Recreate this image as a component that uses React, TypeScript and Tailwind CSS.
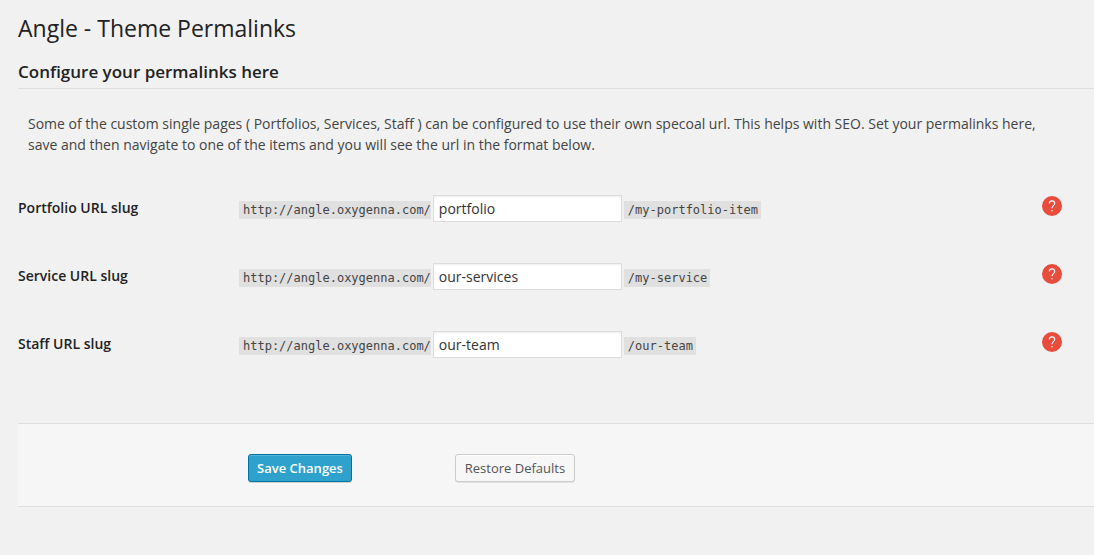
const rows = [
  { id: "portfolio", label: "Portfolio URL slug", value: "portfolio", suffix: "/my-portfolio-item" },
  { id: "service", label: "Service URL slug", value: "our-services", suffix: "/my-service" },
  { id: "staff", label: "Staff URL slug", value: "our-team", suffix: "/our-team" },
];

const codeClass =
  "mt-1 h-[18px] bg-[#e0e0e0] pl-1 font-['DejaVu_Sans_Mono',monospace] text-xs leading-[18px] text-[#444]";

function HelpIcon() {
  return (
    <svg viewBox="0 0 20 20" className="size-5" aria-hidden="true">
      <circle cx="10" cy="10" r="10" fill="#e74c3c" />
      <path
        d="M7.3 7.4C7.4 5.8 8.5 4.9 10 4.9s2.7 1 2.7 2.5c0 2.2-2.7 2.4-2.7 4.9"
        fill="none"
        stroke="#fff"
        strokeWidth="1.1"
      />
      <rect x="9.4" y="14" width="1.2" height="1.3" fill="#fff" />
    </svg>
  );
}

export default function App() {
  return (
    <main className="min-h-screen bg-[#f1f1f1] pl-[18px] font-['Open_Sans',sans-serif] text-sm text-[#444]">
      <h1 className="pt-3 text-[23px] leading-8 text-[#222]">Angle - Theme Permalinks</h1>
      <form onSubmit={(e) => e.preventDefault()}>
        <h2 className="mt-4 border-b border-[#dfdfdf] pb-1 text-[17px] leading-6 font-semibold text-[#222]">
          Configure your permalinks here
        </h2>
        <p className="mt-6 pr-8 pl-[10px] leading-[21px]">
          Some of the custom single pages ( Portfolios, Services, Staff ) can be configured to use their own specoal url.
          This helps with SEO. Set your permalinks here, save and then navigate to one of the items and you will see the
          url in the format below.
        </p>
        <div className="mt-[39px] flex flex-col gap-10">
          {rows.map((row) => (
            <div key={row.id} className="flex h-7 items-center pr-8">
              <label htmlFor={row.id} className="w-[221px] shrink-0 pb-px font-semibold text-[#222]">
                {row.label}
              </label>
              <div className="flex flex-1 items-center gap-[2px]">
                <code className={codeClass}>http://angle.oxygenna.com/</code>
                <input
                  id={row.id}
                  defaultValue={row.value}
                  className="h-[27px] w-[189px] border border-[#ddd] bg-white px-[5px] text-[#333] shadow-[inset_0_1px_2px_rgba(0,0,0,0.07)] outline-none"
                />
                <code className={codeClass + " pr-[3px]"}>{row.suffix}</code>
              </div>
              <button type="button" aria-label={"Help: " + row.label} className="mb-1">
                <HelpIcon />
              </button>
            </div>
          ))}
        </div>
        <div className="mt-[65px] flex border-y border-[#dfdfdf] bg-[#f6f6f6] pt-[30px] pb-6 pl-[230px]">
          <button
            type="submit"
            className="mr-[103px] h-7 w-[104px] rounded-[3px] border border-[#0074a2] bg-[#2ea2cc] text-[13px] font-semibold text-white shadow-[inset_0_1px_0_rgba(120,200,230,0.5),0_1px_0_rgba(0,0,0,0.15)]"
          >
            Save Changes
          </button>
          <button
            type="button"
            className="h-7 w-[120px] rounded-[3px] border border-[#ccc] bg-[#f7f7f7] text-[13px] text-[#555] shadow-[inset_0_1px_0_#fff,0_1px_0_rgba(0,0,0,0.08)]"
          >
            Restore Defaults
          </button>
        </div>
      </form>
    </main>
  );
}
